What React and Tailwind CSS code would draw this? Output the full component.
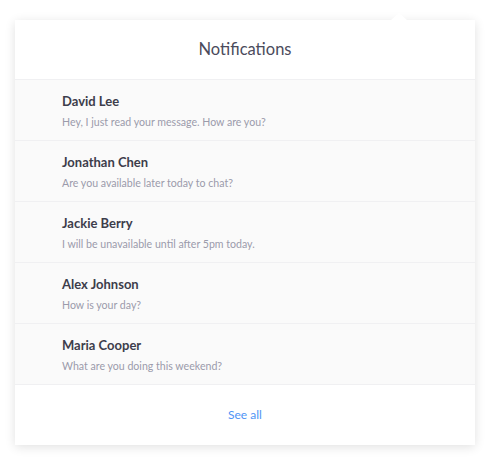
import React from "react";

const ITEMS = [
  { name: "David Lee", message: "Hey, I just read your message. How are you?" },
  { name: "Jonathan Chen", message: "Are you available later today to chat?" },
  { name: "Jackie Berry", message: "I will be unavailable until after 5pm today." },
  { name: "Alex Johnson", message: "How is your day?" },
  { name: "Maria Cooper", message: "What are you doing this weekend?" },
];

export default function App() {
  return (
    <div className="h-[462px] w-[490px] bg-white pt-5 pl-[15px] font-['Lato',sans-serif]">
      <div className="relative w-[460px] bg-white shadow-[0_2px_10px_rgba(0,0,0,0.12)]">
        <div className="absolute -top-[7px] left-[376px] h-0 w-0 border-x-[8px] border-b-[7px] border-x-transparent border-b-white" />
        <div className="flex h-[60px] items-center justify-center border-b border-[#f0f0f2]">
          <h1 className="text-[16.5px] text-[#4b4b5c]">Notifications</h1>
        </div>
        <ul className="bg-[#fafafa]">
          {ITEMS.map(({ name, message }) => (
            <li key={name} className="flex h-[61px] flex-col justify-center border-b border-[#f0f0f2] pl-[47px]">
              <p className="text-[13px] font-bold leading-5 text-[#3d3d4b]">{name}</p>
              <p className="mt-[3px] text-[10.6px] leading-4 text-[#9b9bab]">{message}</p>
            </li>
          ))}
        </ul>
        <div className="flex h-[60px] items-center justify-center">
          <a className="text-[12px] text-[#4f94f5]">See all</a>
        </div>
      </div>
    </div>
  );
}
